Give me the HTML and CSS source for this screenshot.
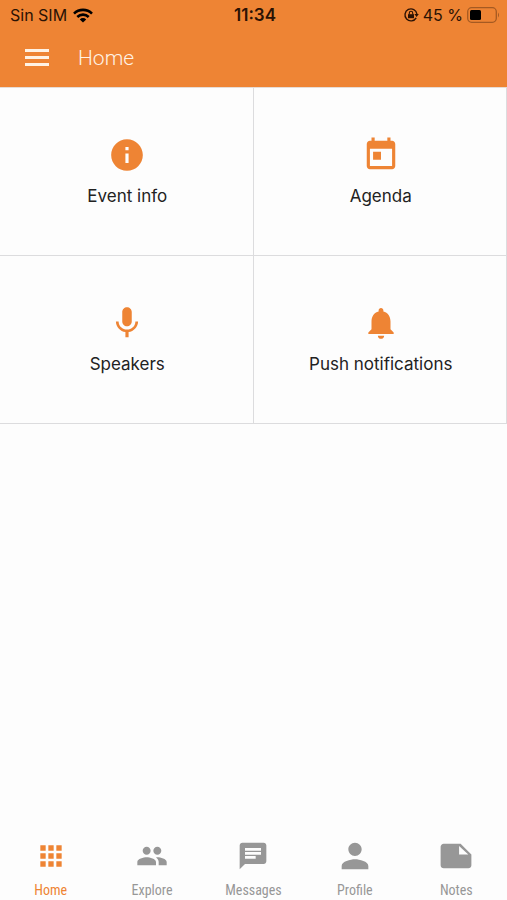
FILE: index.html
```html
<!DOCTYPE html>
<html lang="en">
<head>
  <meta charset="utf-8">
  <meta name="viewport" content="width=device-width, initial-scale=1">
  <title>Home</title>
  <link rel="stylesheet" href="styles.css">
</head>
<body>
  <header class="header">
    <div class="status">
      <div class="status-left">
        <span>Sin SIM</span>
        <svg class="wifi" viewBox="0 0 20 15" aria-hidden="true">
          <g fill="none" stroke="currentColor" stroke-width="2.6">
            <path d="M1 5.6a12.8 12.8 0 0 1 18 0"/>
            <path d="M4.3 9a8.1 8.1 0 0 1 11.4 0"/>
          </g>
          <path d="M10 14.6l-3.2-3.2a4.6 4.6 0 0 1 6.4 0z"/>
        </svg>
      </div>
      <span class="time">11:34</span>
      <div class="status-right">
        <svg class="lock" viewBox="0 0 16 16" aria-hidden="true">
          <path d="M13.2 10.8A6 6 0 1 1 13.9 7" fill="none" stroke="currentColor" stroke-width="1.4"/>
          <path d="M11.4 7h4.4l-2.2 3z"/>
          <path d="M5 7.2h6v4H5z"/>
          <path d="M6.3 7.4V6a1.7 1.7 0 0 1 3.4 0v1.4" fill="none" stroke="currentColor" stroke-width="1.1"/>
        </svg>
        <span>45 %</span>
        <svg class="battery" viewBox="0 0 33 16" aria-hidden="true">
          <rect x="0.7" y="0.7" width="28.6" height="14.6" rx="4" fill="none" stroke="#a55a22" stroke-width="1.3"/>
          <rect x="3" y="3" width="11" height="10" rx="1.5" fill="#000"/>
          <path d="M31 5.5q2 2.500 0 5z" fill="#a55a22"/>
        </svg>
      </div>
    </div>
    <div class="toolbar">
      <button class="menu" type="button" aria-label="Menu">
        <svg viewBox="0 0 24 18" aria-hidden="true"><path d="M0 0h24v3H0zM0 7h24v3H0zM0 14h24v3H0z"/></svg>
      </button>
      <h1>Home</h1>
    </div>
  </header>

  <main class="grid">
    <button class="tile" type="button">
      <svg viewBox="0 0 24 24" aria-hidden="true"><path d="M12 2C6.48 2 2 6.48 2 12s4.48 10 10 10 10-4.480 10-10S17.520 2 12 2zm1 15h-2v-6h2v6zm0-8h-2V7h2v2z"/></svg>
      <span>Event info</span>
    </button>
    <button class="tile" type="button">
      <svg viewBox="0 0 24 24" aria-hidden="true"><path d="M19 3h-1V1h-2v2H8V1H6v2H5c-1.110 0-1.990.9-1.990 2L3 19c0 1.100.890 2 2 2h14c1.100 0 2-.9 2-2V5c0-1.100-.9-2-2-2zm0 16H5V8h14v11zM7 10h5v5H7z"/></svg>
      <span>Agenda</span>
    </button>
    <button class="tile" type="button">
      <svg viewBox="0 0 24 24" aria-hidden="true"><path d="M12 14c1.660 0 3-1.340 3-3V5c0-1.660-1.340-3-3-3S9 3.340 9 5v6c0 1.660 1.340 3 3 3zm5.300-3c0 3-2.540 5.100-5.300 5.100S6.700 14 6.700 11H5c0 3.410 2.720 6.230 6 6.720V21h2v-3.280c3.280-.480 6-3.300 6-6.720h-1.700z"/></svg>
      <span>Speakers</span>
    </button>
    <button class="tile" type="button">
      <svg viewBox="0 0 24 24" aria-hidden="true"><path d="M12 22c1.100 0 2-.9 2-2h-4c0 1.100.890 2 2 2zm6-6v-5c0-3.070-1.640-5.640-4.500-6.320V4c0-.830-.670-1.500-1.500-1.500s-1.500.670-1.500 1.500v.680C7.630 5.360 6 7.920 6 11v5l-2 2v1h16v-1l-2-2z"/></svg>
      <span>Push notifications</span>
    </button>
  </main>

  <nav class="tabs">
    <a class="tab active" href="#home">
      <svg viewBox="0 0 24 24" aria-hidden="true"><path d="M4 8h4V4H4v4zm6 12h4v-4h-4v4zm-6 0h4v-4H4v4zm0-6h4v-4H4v4zm6 0h4v-4h-4v4zm6-10v4h4V4h-4zm-6 4h4V4h-4v4zm6 6h4v-4h-4v4zm0 6h4v-4h-4v4z"/></svg>
      <span>Home</span>
    </a>
    <a class="tab" href="#explore">
      <svg viewBox="0 0 24 24" aria-hidden="true"><path d="M16 11c1.660 0 2.990-1.340 2.990-3S17.660 5 16 5c-1.660 0-3 1.340-3 3s1.340 3 3 3zm-8 0c1.660 0 2.990-1.340 2.990-3S9.660 5 8 5C6.340 5 5 6.340 5 8s1.340 3 3 3zm0 2c-2.330 0-7 1.170-7 3.500V19h14v-2.500c0-2.330-4.670-3.500-7-3.500zm8 0c-.290 0-.620.020-.970.050 1.160.840 1.970 1.970 1.970 3.450V19h6v-2.500c0-2.330-4.670-3.500-7-3.500z"/></svg>
      <span>Explore</span>
    </a>
    <a class="tab" href="#messages">
      <svg viewBox="0 0 24 24" aria-hidden="true"><path d="M20 2H4c-1.100 0-1.990.9-1.990 2L2 22l4-4h14c1.100 0 2-.9 2-2V4c0-1.100-.9-2-2-2zM6 9h12v2H6V9zm8 5H6v-2h8v2zm4-6H6V6h12v2z"/></svg>
      <span>Messages</span>
    </a>
    <a class="tab tab-large" href="#profile">
      <svg viewBox="0 0 24 24" aria-hidden="true"><path d="M12 12c2.210 0 4-1.790 4-4s-1.790-4-4-4-4 1.790-4 4 1.790 4 4 4zm0 2c-2.670 0-8 1.340-8 4v2h16v-2c0-2.660-5.330-4-8-4z"/></svg>
      <span>Profile</span>
    </a>
    <a class="tab tab-large" href="#notes">
      <svg viewBox="0 0 26 26" aria-hidden="true"><path d="M16 5H5c-1.100 0-2 .9-2 2v12c0 1.100.9 2 2 2h16c1.100 0 2-.9 2-2v-7l-7-7zm-1 7V6.500l6 5.500h-6z"/></svg>
      <span>Notes</span>
    </a>
  </nav>
</body>
</html>
```
FILE: styles.css
```css
* {
  box-sizing: border-box;
}

body {
  margin: 0;
  min-height: 100vh;
  display: flex;
  flex-direction: column;
  background-color: #fdfdfd;
  color: #222;
  font-family: Inter, "Liberation Sans", sans-serif;
}

svg {
  display: block;
  fill: currentColor;
}

button {
  padding: 0;
  border: none;
  background: none;
  color: inherit;
  font: inherit;
}

.header {
  background-color: #ee8434;
}

.status {
  display: grid;
  grid-template-columns: 1fr auto 1fr;
  align-items: center;
  height: 30px;
  padding: 0 7px 0 10px;
  color: #2b1204;
  font-size: 16px;
}

.status-left,
.status-right {
  display: flex;
  align-items: center;
  gap: 6px;
}

.status-right {
  justify-content: flex-end;
  gap: 4px;
}

.time {
  font-size: 17px;
  font-weight: 600;
}

.wifi {
  width: 20px;
  height: 15px;
  color: #000;
}

.lock {
  width: 16px;
  height: 16px;
}

.battery {
  width: 33px;
  height: 16px;
}

.toolbar {
  display: flex;
  align-items: center;
  gap: 29px;
  height: 57px;
  padding: 0 25px 2px;
  color: #fff2e4;
}

.menu svg {
  width: 24px;
  height: 18px;
}

.toolbar h1 {
  margin: 0;
  font-family: Roboto, sans-serif;
  font-size: 21px;
  font-weight: 300;
}

.grid {
  display: grid;
  grid-template-columns: 1fr 1fr;
  flex: 1;
  align-content: start;
  border-top: 1px solid #e6dcd6;
}

.tile {
  display: flex;
  flex-direction: column;
  align-items: center;
  justify-content: center;
  gap: 10px;
  height: 168px;
  padding-left: 2px;
  border-right: 1px solid #dcdcde;
  border-bottom: 1px solid #dcdcde;
  font-size: 17px;
  line-height: 24px;
}

.tile svg {
  width: 38px;
  height: 38px;
  color: #ee8434;
}

.tabs {
  display: grid;
  grid-template-columns: repeat(5, 1fr);
  height: 64px;
}

.tab {
  display: flex;
  flex-direction: column;
  align-items: center;
  justify-content: space-between;
  height: 64px;
  padding: 4px 0 0;
  color: #979797;
  font-family: "Avenir Next Condensed", "Roboto Condensed", "Liberation Sans Narrow", "Open Sans Condensed", Lato, sans-serif;
  font-size: 14px;
  line-height: 20px;
  text-decoration: none;
}

.tab svg {
  width: 32px;
  height: 32px;
}

.tab-large {
  padding-top: 0;
}

.tab-large svg {
  width: 40px;
  height: 40px;
}

.active {
  color: #ee8434;
}
```
